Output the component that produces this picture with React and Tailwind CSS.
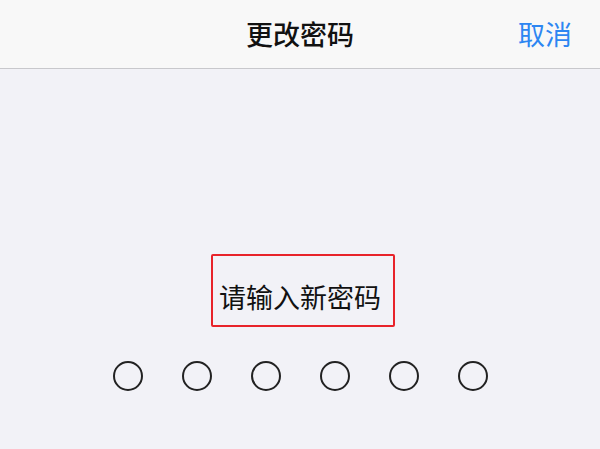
export default function App() {
  const dots = [0, 1, 2, 3, 4, 5];
  return (
    <div
      className="w-[600px] h-[449px] bg-[#f2f2f7] flex flex-col overflow-hidden"
      style={{ fontFamily: '"Noto Sans CJK SC", "Noto Sans", sans-serif' }}
    >
      <div className="h-[69px] shrink-0 bg-[#f8f8f8] border-b border-[#c8c8cc] grid grid-cols-[1fr_auto_1fr] items-center pb-[2px]">
        <div />
        <div className="text-[27px] font-medium text-[#111] leading-none">更改密码</div>
        <div className="flex justify-end pr-[28px]">
          <span className="text-[27px] text-[#2d86f2] leading-none">取消</span>
        </div>
      </div>

      <div className="flex flex-col items-center">
        <div className="mt-[185px] ml-[5px] w-[184px] h-[73px] border-2 border-[#e8232a] rounded-[2px] flex items-center justify-center pt-[12px] pr-[5px]">
          <span className="text-[27px] text-[#111] leading-none">请输入新密码</span>
        </div>

        <div className="mt-[34px] flex gap-[39px]">
          {dots.map((d) => (
            <div key={d} className="w-[30px] h-[30px] rounded-full border-2 border-[#222]" />
          ))}
        </div>
      </div>
    </div>
  );
}
